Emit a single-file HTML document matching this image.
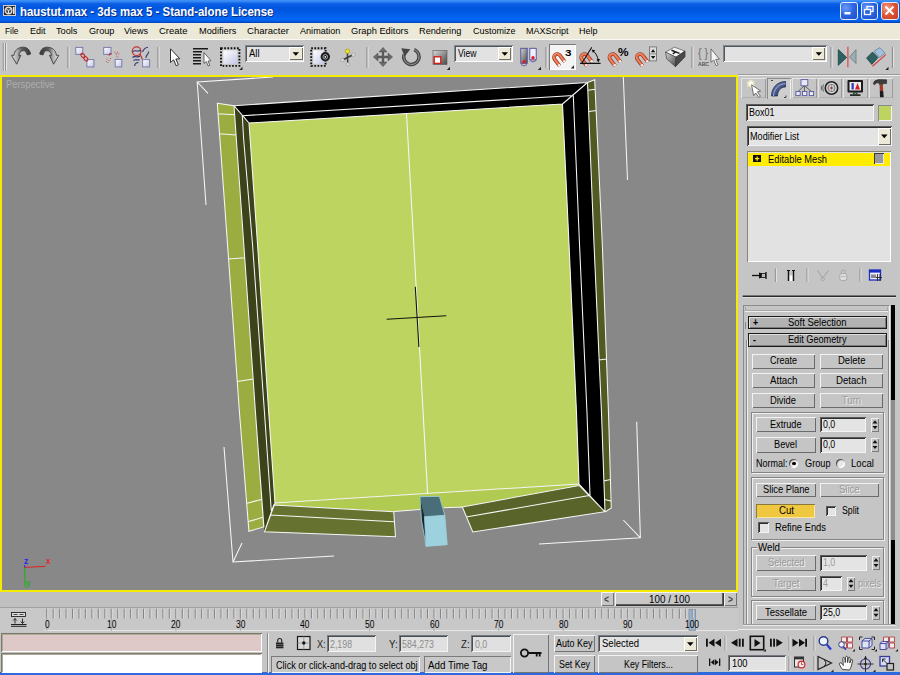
<!DOCTYPE html>
<html lang="en"><head><meta charset="utf-8"><title>haustut.max - 3ds max 5 - Stand-alone License</title>
<style>
html,body{margin:0;padding:0}
body{width:900px;height:675px;position:relative;overflow:hidden;background:#c5c5c5;font-family:"Liberation Sans",sans-serif;font-size:9.8px;color:#000}
body>div,body>svg,body>span{position:absolute}
.t{white-space:nowrap;line-height:1;transform-origin:0 50%;display:block}
</style></head><body>
<div id="title" style="left:0;top:0;width:900px;height:22.800px;background:linear-gradient(#4494f8 0%,#3084f4 7%,#0c60e6 16%,#0056de 32%,#0058e2 50%,#0462ee 70%,#0468f4 86%,#0356da 94%,#0240b8 100%)"></div>
<svg style="left:3px;top:5px" width="13" height="11" viewBox="0 0 13 11"><rect x="0" y="0" width="13" height="11" fill="#2a2a2a"/><rect x="0.5" y="0.5" width="12" height="10" fill="none" stroke="#cfcfcf" stroke-width="1"/><circle cx="5.5" cy="5.5" r="3.4" fill="#555" stroke="#e8e8e8" stroke-width="1.2"/><path d="M5.5 5.5V9M5.5 5.5L2.8 3.6M5.5 5.5L8.2 3.6" stroke="#e8e8e8" stroke-width="1"/><rect x="10" y="2" width="1.6" height="7" fill="#e8e8e8"/></svg>
<span class="t" style="left:19.5px;top:6.0px;font-size:12px;transform:scaleX(0.950);color:#fff;font-weight:bold;text-shadow:1px 1px 0 #0a2a80;">haustut.max - 3ds max 5 - Stand-alone License</span>
<div style="left:840px;top:2.300px;width:15.5px;height:15.500px;border:1px solid #e4ecfc;border-radius:3px;background:radial-gradient(circle at 30% 30%,#6a9cf8 0%,#2c64e0 50%,#1c4cc8 100%)"></div>
<div style="left:860.5px;top:2.300px;width:15.5px;height:15.500px;border:1px solid #e4ecfc;border-radius:3px;background:radial-gradient(circle at 30% 30%,#6a9cf8 0%,#2c64e0 50%,#1c4cc8 100%)"></div>
<div style="left:881px;top:2.300px;width:15.5px;height:15.500px;border:1px solid #e4ecfc;border-radius:3px;background:radial-gradient(circle at 30% 30%,#f0a088 0%,#e0583a 45%,#c43a1c 100%)"></div>
<svg style="left:840px;top:2.300px" width="60" height="18" viewBox="840 3 60 18"><rect x="844.5" y="13" width="6" height="2.4" fill="#fff"/><rect x="867" y="7.5" width="6" height="5" fill="none" stroke="#fff" stroke-width="1.3"/><rect x="864.5" y="10.5" width="6" height="5" fill="#2c64e0" stroke="#fff" stroke-width="1.3"/><path d="M885.5 7.5L893.5 15.5M893.5 7.5L885.5 15.5" stroke="#fff" stroke-width="2"/></svg>
<div style="left:0;top:22.800px;width:900px;height:17px;background:#ece9d8"></div>
<div style="left:0;top:39.300px;width:900px;height:1.200px;background:#f8f8f4"></div>
<span class="t" style="left:5.0px;top:25.9px;font-size:9.9px;transform:scaleX(0.846);">File</span>
<span class="t" style="left:29.5px;top:25.9px;font-size:9.9px;transform:scaleX(0.909);">Edit</span>
<span class="t" style="left:56.0px;top:25.9px;font-size:9.9px;transform:scaleX(0.930);">Tools</span>
<span class="t" style="left:88.5px;top:25.9px;font-size:9.9px;transform:scaleX(0.927);">Group</span>
<span class="t" style="left:124.0px;top:25.9px;font-size:9.9px;transform:scaleX(0.915);">Views</span>
<span class="t" style="left:159.0px;top:25.9px;font-size:9.9px;transform:scaleX(0.959);">Create</span>
<span class="t" style="left:198.5px;top:25.9px;font-size:9.9px;transform:scaleX(0.934);">Modifiers</span>
<span class="t" style="left:246.5px;top:25.9px;font-size:9.9px;transform:scaleX(0.966);">Character</span>
<span class="t" style="left:299.5px;top:25.9px;font-size:9.9px;transform:scaleX(0.920);">Animation</span>
<span class="t" style="left:351.0px;top:25.9px;font-size:9.9px;transform:scaleX(0.941);">Graph Editors</span>
<span class="t" style="left:418.5px;top:25.9px;font-size:9.9px;transform:scaleX(0.930);">Rendering</span>
<span class="t" style="left:472.5px;top:25.9px;font-size:9.9px;transform:scaleX(0.909);">Customize</span>
<span class="t" style="left:526.0px;top:25.9px;font-size:9.9px;transform:scaleX(0.909);">MAXScript</span>
<span class="t" style="left:579.0px;top:25.9px;font-size:9.9px;transform:scaleX(0.909);">Help</span>
<div style="left:0;top:40.500px;width:900px;height:34.500px;background:#c5c5c5"></div>
<div style="left:548.5px;top:44px;width:27.5px;height:26px;background:#f4f4f4;box-shadow:inset 1px 1px 0 #7a7a7a,inset -1px -1px 0 #fff"></div>
<svg style="left:0;top:41px" width="900" height="34" viewBox="0 41 900 34"><defs><linearGradient id="gd" x1="0" y1="0" x2="1" y2="1"><stop offset="0" stop-color="#d8d8d8"/><stop offset="1" stop-color="#484848"/></linearGradient><linearGradient id="gu" x1="0" y1="0" x2="1" y2="0"><stop offset="0" stop-color="#e4e4e4"/><stop offset="0.3" stop-color="#b0b0b0"/><stop offset="0.55" stop-color="#5a5a5a"/><stop offset="1" stop-color="#383838"/></linearGradient><linearGradient id="gr" x1="1" y1="0" x2="0" y2="0"><stop offset="0" stop-color="#e4e4e4"/><stop offset="0.3" stop-color="#b0b0b0"/><stop offset="0.55" stop-color="#5a5a5a"/><stop offset="1" stop-color="#383838"/></linearGradient><linearGradient id="gs" x1="0" y1="0" x2="1" y2="1"><stop offset="0" stop-color="#ffffff"/><stop offset="1" stop-color="#c4c8e4"/></linearGradient></defs><path d="M3.300 43V71M5.600 43V71" stroke="#8a8a8a" stroke-width="1"/><path d="M4.300 43V71M6.600 43V71" stroke="#f0f0f0" stroke-width="0.800"/><path d="M68 47V68" stroke="#8c8c8c" stroke-width="1.2"/><path d="M69.1 47V68" stroke="#e8e8e8" stroke-width="0.9"/><path d="M158 47V68" stroke="#8c8c8c" stroke-width="1.2"/><path d="M159.1 47V68" stroke="#e8e8e8" stroke-width="0.9"/><path d="M367 47V68" stroke="#8c8c8c" stroke-width="1.2"/><path d="M368.1 47V68" stroke="#e8e8e8" stroke-width="0.9"/><path d="M546 47V68" stroke="#8c8c8c" stroke-width="1.2"/><path d="M547.1 47V68" stroke="#e8e8e8" stroke-width="0.9"/><path d="M692 47V68" stroke="#8c8c8c" stroke-width="1.2"/><path d="M693.1 47V68" stroke="#e8e8e8" stroke-width="0.9"/><path d="M831 47V68" stroke="#8c8c8c" stroke-width="1.2"/><path d="M832.1 47V68" stroke="#e8e8e8" stroke-width="0.9"/><path d="M892.5 47V68" stroke="#8c8c8c" stroke-width="1.2"/><path d="M893.6 47V68" stroke="#e8e8e8" stroke-width="0.9"/><path d="M11.5 55.3L14 55.3C14.3 50.5 18 47.2 23.5 47.2C27.5 47.3 30 50.5 30.6 54L27.3 55C26.5 52 25 50.6 23.3 50.6C20.5 50.8 19 53 18.8 55.3L20.8 55.3L16.7 64.2Z" fill="url(#gu)" stroke="#3c3c3c" stroke-width="0.9" stroke-linejoin="round"/><path d="M58.8 55.3 L56.3 55.3 C56 50.5 52.3 47.2 46.8 47.2 C42.8 47.3 40.3 50.5 39.7 54 L43 55 C43.8 52 45.3 50.6 47 50.6 C49.8 50.8 51.3 53 51.5 55.3 L49.5 55.3 L53.6 64.2 Z" fill="url(#gr)" stroke="#3c3c3c" stroke-width="0.9" stroke-linejoin="round"/><rect x="75.8" y="47.4" width="7" height="7" fill="url(#gs)" stroke="#7c7cac" stroke-width="1"/><rect x="86.9" y="59.6" width="7" height="7.3" fill="url(#gs)" stroke="#7c7cac" stroke-width="1"/><ellipse cx="82.9" cy="55.6" rx="2.5" ry="1.6" transform="rotate(48 82.9 55.6)" fill="none" stroke="#c22828" stroke-width="1.1"/><ellipse cx="85.8" cy="58.8" rx="2.5" ry="1.6" transform="rotate(48 85.8 58.800)" fill="none" stroke="#c22828" stroke-width="1.1"/><rect x="103.700" y="47.400" width="7.300" height="7" fill="url(#gs)" stroke="#7c7cac" stroke-width="1"/><rect x="115.200" y="59.400" width="6.600" height="7.500" fill="url(#gs)" stroke="#7c7cac" stroke-width="1"/><path d="M109 55.500Q109.300 53.500 111.500 53.600" fill="none" stroke="#b82828" stroke-width="1.300"/><g fill="#c84848"><circle cx="114.800" cy="52" r="0.600"/><circle cx="116.200" cy="53.800" r="0.700"/><circle cx="117.600" cy="52.300" r="0.600"/><circle cx="119" cy="54" r="0.600"/><circle cx="116.500" cy="56" r="0.600"/><circle cx="118" cy="57" r="0.500"/><circle cx="107" cy="59" r="0.600"/><circle cx="109" cy="60.500" r="0.600"/><circle cx="108" cy="62.500" r="0.600"/><circle cx="110.500" cy="58.500" r="0.600"/><circle cx="106.500" cy="61.500" r="0.500"/></g><circle cx="136.600" cy="51.200" r="4.300" fill="none" stroke="#c83030" stroke-width="1.200"/><path d="M139.800 54.200Q141.500 56.500 142.400 59.600" fill="none" stroke="#c83030" stroke-width="1.200"/><path d="M133 51.500C135.500 49.500 137.500 52.500 140.500 50.200M132.500 57.500C135 55 137 58.500 140 56M133.500 60.500C136 58.500 137.500 61 139.500 59.500M134.500 66C135 63 136.500 62.500 138.500 62.500M142.500 52C143.500 49.500 144.500 47.500 148 47.300M146 58C145.500 55 148.500 54.500 148.800 51.500" fill="none" stroke="#2c3470" stroke-width="1.100"/><rect x="142.600" y="59.600" width="7" height="7.300" fill="url(#gs)" stroke="#7c7cac" stroke-width="1"/><path d="M170.500 48.800V62.500L173.600 59.800L176.200 65.800L178.400 64.800L175.800 59L179.800 58.800Z" fill="#fff" stroke="#333" stroke-width="1" stroke-linejoin="round"/><path d="M193 48.800H208M193 51.800H202M193 54.800H201M193 57.800H201M193 60.800H201M193 63.800H201" stroke="#1a1a1a" stroke-width="1.500"/><path d="M204 52.500V63.500L206.300 61.500L208.200 66L209.800 65.300L208 61L211 60.800Z" fill="#fff" stroke="#444" stroke-width="0.800" stroke-linejoin="round"/><rect x="223.300" y="50.300" width="14" height="13.600" fill="url(#gs)"/><rect x="221" y="48.300" width="18.400" height="17.600" fill="none" stroke="#111" stroke-width="1.900" stroke-dasharray="1.700 1.500"/><path d="M242.5 70h-3.2l3.2 -3.2z" fill="#222"/><rect x="313.300" y="50.300" width="11" height="13.600" fill="url(#gs)"/><rect x="311.200" y="48.300" width="14.400" height="17.600" fill="none" stroke="#111" stroke-width="1.900" stroke-dasharray="1.700 1.500"/><circle cx="325.300" cy="56.800" r="4.700" fill="#1a1a1a"/><circle cx="325.300" cy="56.800" r="2.300" fill="none" stroke="#bcbcbc" stroke-width="0.900"/><circle cx="325.300" cy="56.800" r="0.900" fill="#fff"/><path d="M347.500 52.500L347.500 57.500M342.700 60L347.500 57.500L353.200 54.800M347.500 57.500L347.800 64" stroke="#3c3c3c" stroke-width="1.500" fill="none"/><circle cx="347.500" cy="51.300" r="2.200" fill="#f0e020" stroke="#9a9020" stroke-width="0.600"/><circle cx="342.500" cy="60.100" r="1.700" fill="#e0e0e0" stroke="#888" stroke-width="0.500"/><circle cx="353.400" cy="54.700" r="1.700" fill="#e0e0e0" stroke="#888" stroke-width="0.500"/><circle cx="347.800" cy="64.300" r="1.700" fill="#e0e0e0" stroke="#888" stroke-width="0.500"/><path d="M383 50V64M376 57H390" stroke="#5a5a5a" stroke-width="2.300"/><path d="M383 47.400l4 4.600h-8zM383 66.600l4 -4.600h-8zM373.400 57l4.600 -4v8zM392.600 57l-4.600 -4v8z" fill="#6a6a6a" stroke="#484848" stroke-width="0.500"/><path d="M414.200 49.600A7.700 7.700 0 1 1 404 54.500" fill="none" stroke="#444" stroke-width="3.500"/><path d="M414.200 49.600A7.700 7.700 0 1 1 404 54.500" fill="none" stroke="#8c8c8c" stroke-width="1.100"/><path d="M401.300 48.300L410.300 49.300L404.600 56.600Z" fill="#444"/><rect x="433" y="50.500" width="14" height="14" fill="url(#gd)" stroke="#555" stroke-width="0.600"/><rect x="434.200" y="56.800" width="6.600" height="6.600" fill="#fff" stroke="#d02020" stroke-width="1.400"/><path d="M450 70h-3.2l3.2 -3.2z" fill="#222"/><rect x="520.800" y="48.300" width="6.400" height="15" fill="url(#gd)" stroke="#4a4a9a" stroke-width="0.900"/><rect x="529.800" y="48.300" width="6.400" height="11.500" fill="#eef" stroke="#4a4a9a" stroke-width="0.900"/><circle cx="524" cy="61.800" r="1.700" fill="#e02020"/><circle cx="533" cy="57.800" r="1.700" fill="#e02020"/><path d="M521 64.500Q524 67.500 527 64.500M530 60.500Q533 63.500 536 60.500" fill="none" stroke="#4a4a9a" stroke-width="0.800"/><path d="M541 70h-3.2l3.2 -3.2z" fill="#222"/><path d="M559.64 65.92L554.66 59.28A3.3 3.3 0 0 1 559.94 55.32L564.92 61.96" fill="none" stroke="#7a3a28" stroke-width="3.7"/><path d="M559.64 65.92L554.66 59.28A3.3 3.3 0 0 1 559.94 55.32L564.92 61.96" fill="none" stroke="#e8643e" stroke-width="2.7"/><path d="M559.64 65.92L554.66 59.28A3.3 3.3 0 0 1 559.94 55.32L564.92 61.96" fill="none" stroke="#f6a080" stroke-width="0.8" transform="translate(-0.5,-0.5)"/><path d="M559.64 65.92L558.62 64.56M564.92 61.96L563.90 60.60" fill="none" stroke="#f6f6f6" stroke-width="2.7"/><path d="M574 68.5h-3.2l3.2 -3.2z" fill="#222"/><path d="M586.84 65.92L581.86 59.28A3.3 3.3 0 0 1 587.14 55.32L592.12 61.96" fill="none" stroke="#7a3a28" stroke-width="3.7"/><path d="M586.84 65.92L581.86 59.28A3.3 3.3 0 0 1 587.14 55.32L592.12 61.96" fill="none" stroke="#e8643e" stroke-width="2.7"/><path d="M586.84 65.92L581.86 59.28A3.3 3.3 0 0 1 587.14 55.32L592.12 61.96" fill="none" stroke="#f6a080" stroke-width="0.8" transform="translate(-0.5,-0.5)"/><path d="M586.84 65.92L585.82 64.56M592.12 61.96L591.10 60.60" fill="none" stroke="#f6f6f6" stroke-width="2.7"/><path d="M580 63.400H600.600M582 63L591.800 47.200" stroke="#111" stroke-width="1.100" fill="none"/><path d="M592.500 50.500Q597.500 54 598.300 61" stroke="#111" stroke-width="1" fill="none"/><path d="M591.600 49.600l3.600 0.600l-2.200 2.700zM598.400 62.600l-1.900 -3.300l3.500 -0.300z" fill="#111"/><path d="M615.14 65.92L610.16 59.28A3.3 3.3 0 0 1 615.44 55.32L620.42 61.96" fill="none" stroke="#7a3a28" stroke-width="3.7"/><path d="M615.14 65.92L610.16 59.28A3.3 3.3 0 0 1 615.44 55.32L620.42 61.96" fill="none" stroke="#e8643e" stroke-width="2.7"/><path d="M615.14 65.92L610.16 59.28A3.3 3.3 0 0 1 615.44 55.32L620.42 61.96" fill="none" stroke="#f6a080" stroke-width="0.8" transform="translate(-0.5,-0.5)"/><path d="M615.14 65.92L614.12 64.56M620.42 61.96L619.40 60.60" fill="none" stroke="#f6f6f6" stroke-width="2.7"/><path d="M642.44 65.92L637.46 59.28A3.3 3.3 0 0 1 642.74 55.32L647.72 61.96" fill="none" stroke="#7a3a28" stroke-width="3.7"/><path d="M642.44 65.92L637.46 59.28A3.3 3.3 0 0 1 642.74 55.32L647.72 61.96" fill="none" stroke="#e8643e" stroke-width="2.7"/><path d="M642.44 65.92L637.46 59.28A3.3 3.3 0 0 1 642.74 55.32L647.72 61.96" fill="none" stroke="#f6a080" stroke-width="0.8" transform="translate(-0.5,-0.5)"/><path d="M642.44 65.92L641.42 64.56M647.72 61.96L646.70 60.60" fill="none" stroke="#f6f6f6" stroke-width="2.7"/><rect x="649.600" y="46.900" width="7" height="14" fill="#dcdcdc" stroke="#6a6a6a" stroke-width="0.800"/><path d="M650.900 52.300h4.400l-2.200 -3zM650.900 55.900h4.400l-2.200 3z" fill="#111"/><path d="M649.600 53.900h7" stroke="#6a6a6a" stroke-width="0.700"/><path d="M665.500 52.200L674.400 47.200L685 51.100L676 57.200Z" fill="#f4f4f4" stroke="#555" stroke-width="0.700"/><path d="M665.500 52.200L676 57.200L675.500 66.700L666.700 58.900Z" fill="url(#gd)" stroke="#444" stroke-width="0.700"/><path d="M676 57.200L685 51.100L685 56.700L675.500 66.700Z" fill="#4a4a4a" stroke="#333" stroke-width="0.700"/><path d="M671.500 50.300L679.500 53.400M675.500 51.800L672.800 54" stroke="#1a1a1a" stroke-width="1.500" fill="none"/><path d="M711 48.900V62.300L713.700 60L716 65.700L718 64.800L715.700 59.400L719.400 59.200Z" fill="#f4f4f4" stroke="#666" stroke-width="0.900" stroke-linejoin="round"/><path d="M838.300 49.600V65.300L846.600 57.400Z" fill="#2c6262" stroke="#1c4040" stroke-width="0.800"/><path d="M856 49.600V63.600L849.600 57Z" fill="#9cb0b4" stroke="#647c80" stroke-width="0.800"/><path d="M847.900 46.800V67.300" stroke="#e03838" stroke-width="1.100"/><path d="M866.600 58L872.600 52L878 57.600L871.800 64.400Z" fill="#2c6262" stroke="#1c4040" stroke-width="0.800"/><path d="M874.200 51.200L880 47.600L885 53.200L879.400 57.400Z" fill="#a4c0dc" stroke="#64809c" stroke-width="0.800"/><path d="M872.500 66.200L885.800 54.600" stroke="#e03838" stroke-width="1.200"/><path d="M888.5 70h-3.2l3.2 -3.2z" fill="#222"/></svg>
<div style="left:245px;top:45px;width:59px;height:16.5px;background:#e2e2e2;box-shadow:inset 1px 1px 0 #80868c,inset -1px -1px 0 #fff,inset 2px 2px 0 #50565c"></div>
<div style="left:289px;top:47px;width:13.5px;height:13.0px;background:#ece9d8;box-shadow:inset 1px 1px 0 #fff,inset -1px -1px 0 #716f64"></div>
<svg style="left:289px;top:45px" width="14" height="16.5" viewBox="289 45 14 16.5"><path d="M292.6 52.15H299.0L295.8 55.75Z" fill="#000"/></svg>
<span class="t" style="left:248.5px;top:49.2px;font-size:10px;transform:scaleX(0.945);">All</span>
<div style="left:454px;top:45px;width:58.5px;height:16.5px;background:#e2e2e2;box-shadow:inset 1px 1px 0 #80868c,inset -1px -1px 0 #fff,inset 2px 2px 0 #50565c"></div>
<div style="left:497.5px;top:47px;width:13.5px;height:13.0px;background:#ece9d8;box-shadow:inset 1px 1px 0 #fff,inset -1px -1px 0 #716f64"></div>
<svg style="left:497.5px;top:45px" width="14" height="16.5" viewBox="497.5 45 14 16.5"><path d="M501.1 52.15H507.5L504.3 55.75Z" fill="#000"/></svg>
<span class="t" style="left:457.5px;top:49.2px;font-size:10px;transform:scaleX(0.861);">View</span>
<div style="left:722.5px;top:45px;width:104px;height:16.5px;background:#e2e2e2;box-shadow:inset 1px 1px 0 #80868c,inset -1px -1px 0 #fff,inset 2px 2px 0 #50565c"></div>
<div style="left:811.5px;top:47px;width:13.5px;height:13.0px;background:#ece9d8;box-shadow:inset 1px 1px 0 #fff,inset -1px -1px 0 #716f64"></div>
<svg style="left:811.5px;top:45px" width="14" height="16.5" viewBox="811.5 45 14 16.5"><path d="M815.0999999999999 52.15H821.5L818.3 55.75Z" fill="#000"/></svg>
<span class="t" style="left:565.3px;top:48.3px;font-size:9.6px;transform:scaleX(1.218);font-weight:bold;">3</span>
<span class="t" style="left:618.0px;top:47.0px;font-size:10.6px;transform:scaleX(1.125);font-weight:bold;">%</span>
<span class="t" style="left:698.3px;top:47.1px;font-size:12px;transform:scaleX(0.881);color:#707070;">{ }</span>
<span class="t" style="left:698.3px;top:61.8px;font-size:5.2px;transform:scaleX(0.976);color:#555;font-weight:bold;">ABC</span>
<div style="left:0;top:74.600px;width:738px;height:517.400px;background:#f4ec00"></div>
<svg style="left:2px;top:77px" width="734" height="513" viewBox="2 77 734 513" shape-rendering="geometricPrecision"><rect x="2" y="77" width="734" height="513" fill="#888888"/><polygon points="217.3,103.3 234,105.7 243.75,244 255.5,413 263.9,526.9 248.9,531.3 239.5,413 227.5,244" fill="#9bad40"/><polygon points="234,105.7 249,123 257.5,244 268.75,413 275,503 264.5,531.75 263.75,526.75 255.5,413 243.75,244" fill="#3c431b"/><polygon points="234,105.7 587.5,82.5 562.5,104 249,123" fill="#000"/><polygon points="587.5,82.5 594,244 601.5,413 605,512 579,484 576.5,413 569,244 562.5,104" fill="#000"/><polygon points="587.5,82.5 594.7,79.7 602.3,244 608.5,413 611.25,508 605,512 601.5,413 594,244" fill="#525a22"/><polygon points="249,123 562.5,104 569,244 576.5,413 579,484 275,503 268.75,413 257.5,244" fill="#bed460"/><polygon points="275,503 579,484 579.4,485.6 462.3,506.9 415,509.6 394,511.6 273.8,505" fill="#b1ca52"/><polygon points="273.75,505 393.75,511.75 395.5,536.75 264.5,531.75" fill="#66722f"/><polygon points="462.3,506.9 579.2,485.5 605,511.75 472.8,532" fill="#59642a"/><path d="M217.3 103.3L234 105.7L243.75 244L255.5 413L263.9 526.9L248.9 531.3L239.5 413L227.5 244ZM218 113.7L234.6 114.7M219.6 133.7L236 135M228.7 259L244.8 257.7M237.3 381.5L253.3 379M247.2 503.2L261.3 499.5M248.6 521.6L263 517.2M242.3 115.7L243.7 140L252.5 244L264.5 413L271.25 510.5M263.75 526.75L255.5 413L243.75 244L234 105.7M234 105.7L587.5 82.5M242.3 115.7L573.3 95.5M234 105.7L249 123M562.5 104L587.5 82.5M249 123L562.5 104L569 244L576.5 413L579 484L275 503L268.75 413L257.5 244ZM573.3 95.5L579.5 244L587 413L590 495.5M587.5 82.5L594 244L601.5 413L605 512M587.5 82.5L594.7 79.7L602.3 244L608.5 413L611.25 508L605 512M588 90.3L595.2 89.3M589 111.5L596.2 110.5M598.8 360L606.6 359M603.8 481L610.5 479.5M604.6 499.5L611 501M579 484L605 512M406.5 113.3L427.6 493.4M273.75 505L393.75 511.75L395.5 536.75L264.5 531.75ZM270.5 515L393.9 521.75M275 503L264.5 531.75M462.3 506.9L579.2 485.5L605 511.75L472.8 532ZM466.2 517L589.3 495.6M394 511.6L420 509.4M444 507.8L462.3 506.9M206 205L197.2 82L273 77M197.2 82L208 93.3M623.3 76.7L627.5 180M224 447L233 562L334 556M233 562L242 543M636.7 421.8L640.4 537.8L539 544M640.4 537.8L623.3 520" stroke="#f6f6f6" stroke-width="1.05" fill="none"/><path d="M386.700 319.300L446.300 315.700M415.300 286.700L418.900 347" stroke="#14140c" stroke-width="1.1" fill="none"/><polygon points="420,496.7 439.4,496.4 444.8,515.3 424.4,516.7" fill="#4a6d7a"/><polygon points="424.4,516.7 444.8,515.3 447.200,544.700 426.100,546.400" fill="#9dd1de"/><polygon points="420,496.7 424.4,516.7 426.100,546.400 421.500,520" fill="#16282e"/><path d="M420 496.700L439.400 496.400L444.800 515.300L447.200 544.700L426.100 546.400L421.500 520ZM424.400 516.700L444.800 515.300M424.400 516.700L426.100 546.400" stroke="#9dd1de" stroke-width="0.800" fill="none"/><path d="M24.600 567.400L45.400 566.400" stroke="#e02020" stroke-width="1"/><path d="M24.600 567.400L25.200 587" stroke="#20b020" stroke-width="1.100"/><path d="M24.600 567.400L24.900 565" stroke="#2020e0" stroke-width="1"/></svg>
<span class="t" style="left:5.8px;top:80.2px;font-size:10px;transform:scaleX(0.934);color:#adadad;">Perspective</span>
<span class="t" style="left:23.8px;top:556.7px;font-size:9px;transform:scaleX(0.956);color:#2828e8;font-weight:bold;">z</span>
<span class="t" style="left:46.2px;top:556.7px;font-size:9px;transform:scaleX(0.919);color:#e82828;font-weight:bold;">x</span>
<span class="t" style="left:26.2px;top:579.4px;font-size:9px;transform:scaleX(0.879);color:#20b020;font-weight:bold;">y</span>
<div style="left:0;top:592px;width:738px;height:15px;background:#c0c0c0"></div>
<div style="left:0;top:607px;width:738px;height:25px;background:#c8c8c8"></div><div style="left:0;top:607.2px;width:738px;height:1px;background:#a2a2a2"></div><div style="left:44px;top:630px;width:694px;height:1px;background:#e6e6e6"></div>
<div style="left:601px;top:592.400px;width:12.600px;height:14px;background:#c5c5c5;box-shadow:inset 1px 1px 0 #f2f2f2,inset -1px -1px 0 #747474;"></div>
<div style="left:724px;top:592.400px;width:13px;height:14px;background:#c5c5c5;box-shadow:inset 1px 1px 0 #f2f2f2,inset -1px -1px 0 #747474;"></div>
<div style="left:614.5px;top:592.400px;width:109px;height:14px;background:#c8c8c8;box-shadow:inset 1px 1px 0 #f4f4f4,inset -1px -1px 0 #3a3a3a,inset -2px -2px 0 #5a5a5a"></div>
<span class="t" style="left:649.0px;top:594.5px;font-size:10px;transform:scaleX(0.983);">100 / 100</span>
<span class="t" style="left:604.4px;top:594.3px;font-size:11px;transform:scaleX(0.778);color:#444;font-weight:bold;">&lt;</span>
<span class="t" style="left:727.8px;top:594.3px;font-size:11px;transform:scaleX(0.778);color:#444;font-weight:bold;">></span>
<svg style="left:0;top:607px" width="738" height="26" viewBox="0 607 738 26"><rect x="689" y="609.5" width="6.400" height="21" fill="#9cb4cc" stroke="#7088a0" stroke-width="0.700"/><path d="M46.8 608.800V618.500M53.3 608.800V618.500M59.7 608.800V618.500M66.2 608.800V618.500M72.6 608.800V618.500M79.1 608.800V618.500M85.5 608.800V618.500M92.0 608.800V618.500M98.4 608.800V618.500M104.9 608.800V618.500M111.3 608.800V618.500M117.8 608.800V618.500M124.3 608.800V618.500M130.7 608.800V618.500M137.2 608.800V618.500M143.6 608.800V618.500M150.1 608.800V618.500M156.5 608.800V618.500M163.0 608.800V618.500M169.4 608.800V618.500M175.9 608.800V618.500M182.4 608.800V618.500M188.8 608.800V618.500M195.3 608.800V618.500M201.7 608.800V618.500M208.2 608.800V618.500M214.6 608.800V618.500M221.1 608.800V618.500M227.5 608.800V618.500M234.0 608.800V618.500M240.4 608.800V618.500M246.9 608.800V618.500M253.4 608.800V618.500M259.8 608.800V618.500M266.3 608.800V618.500M272.7 608.800V618.500M279.2 608.800V618.500M285.6 608.800V618.500M292.1 608.800V618.500M298.5 608.800V618.500M305.0 608.800V618.500M311.5 608.800V618.500M317.9 608.800V618.500M324.4 608.800V618.500M330.8 608.800V618.500M337.3 608.800V618.500M343.7 608.800V618.500M350.2 608.800V618.500M356.6 608.800V618.500M363.1 608.800V618.500M369.6 608.800V618.500M376.0 608.800V618.500M382.5 608.800V618.500M388.9 608.800V618.500M395.4 608.800V618.500M401.8 608.800V618.500M408.3 608.800V618.500M414.7 608.800V618.500M421.2 608.800V618.500M427.6 608.800V618.500M434.1 608.800V618.500M440.6 608.800V618.500M447.0 608.800V618.500M453.5 608.800V618.500M459.9 608.800V618.500M466.4 608.800V618.500M472.8 608.800V618.500M479.3 608.800V618.500M485.7 608.800V618.500M492.2 608.800V618.500M498.7 608.800V618.500M505.1 608.800V618.500M511.6 608.800V618.500M518.0 608.800V618.500M524.5 608.800V618.500M530.9 608.800V618.500M537.4 608.800V618.500M543.8 608.800V618.500M550.3 608.800V618.500M556.7 608.800V618.500M563.2 608.800V618.500M569.7 608.800V618.500M576.1 608.800V618.500M582.6 608.800V618.500M589.0 608.800V618.500M595.5 608.800V618.500M601.9 608.800V618.500M608.4 608.800V618.500M614.8 608.800V618.500M621.3 608.800V618.500M627.8 608.800V618.500M634.2 608.800V618.500M640.7 608.800V618.500M647.1 608.800V618.500M653.6 608.800V618.500M660.0 608.800V618.500M666.5 608.800V618.500M672.9 608.800V618.500M679.4 608.800V618.500M685.8 608.800V618.500M692.3 608.800V618.500" stroke="#848484" stroke-width="1.200"/><path d="M47.7 608.800V618.500M54.2 608.800V618.500M60.6 608.800V618.500M67.1 608.800V618.500M73.5 608.800V618.500M80.0 608.800V618.500M86.4 608.800V618.500M92.9 608.800V618.500M99.3 608.800V618.500M105.8 608.800V618.500M112.2 608.800V618.500M118.7 608.800V618.500M125.2 608.800V618.500M131.6 608.800V618.500M138.1 608.800V618.500M144.5 608.800V618.500M151.0 608.800V618.500M157.4 608.800V618.500M163.9 608.800V618.500M170.3 608.800V618.500M176.8 608.800V618.500M183.3 608.800V618.500M189.7 608.800V618.500M196.2 608.800V618.500M202.6 608.800V618.500M209.1 608.800V618.500M215.5 608.800V618.500M222.0 608.800V618.500M228.4 608.800V618.500M234.9 608.800V618.500M241.3 608.800V618.500M247.8 608.800V618.500M254.3 608.800V618.500M260.7 608.800V618.500M267.2 608.800V618.500M273.6 608.800V618.500M280.1 608.800V618.500M286.5 608.800V618.500M293.0 608.800V618.500M299.4 608.800V618.500M305.9 608.800V618.500M312.4 608.800V618.500M318.8 608.800V618.500M325.3 608.800V618.500M331.7 608.800V618.500M338.2 608.800V618.500M344.6 608.800V618.500M351.1 608.800V618.500M357.5 608.800V618.500M364.0 608.800V618.500M370.4 608.800V618.500M376.9 608.800V618.500M383.4 608.800V618.500M389.8 608.800V618.500M396.3 608.800V618.500M402.7 608.800V618.500M409.2 608.800V618.500M415.6 608.800V618.500M422.1 608.800V618.500M428.5 608.800V618.500M435.0 608.800V618.500M441.5 608.800V618.500M447.9 608.800V618.500M454.4 608.800V618.500M460.8 608.800V618.500M467.3 608.800V618.500M473.7 608.800V618.500M480.2 608.800V618.500M486.6 608.800V618.500M493.1 608.800V618.500M499.6 608.800V618.500M506.0 608.800V618.500M512.5 608.800V618.500M518.9 608.800V618.500M525.4 608.800V618.500M531.8 608.800V618.500M538.3 608.800V618.500M544.7 608.800V618.500M551.2 608.800V618.500M557.6 608.800V618.500M564.1 608.800V618.500M570.6 608.800V618.500M577.0 608.800V618.500M583.5 608.800V618.500M589.9 608.800V618.500M596.4 608.800V618.500M602.8 608.800V618.500M609.3 608.800V618.500M615.7 608.800V618.500M622.2 608.800V618.500M628.6 608.800V618.500M635.1 608.800V618.500M641.6 608.800V618.500M648.0 608.800V618.500M654.5 608.800V618.500M660.9 608.800V618.500M667.4 608.800V618.500M673.8 608.800V618.500M680.3 608.800V618.500M686.7 608.800V618.500M693.2 608.800V618.500" stroke="#e6e6e6" stroke-width="0.700"/><path d="M46.8 618.500V631M111.3 618.500V631M175.9 618.500V631M240.4 618.500V631M305.0 618.500V631M369.6 618.500V631M434.1 618.500V631M498.7 618.500V631M563.2 618.500V631M627.8 618.500V631M692.3 618.500V631" stroke="#aaaaaa" stroke-width="0.900"/><rect x="11.500" y="612.500" width="14" height="4" fill="#ddd" stroke="#222" stroke-width="0.900"/><path d="M13.500 614.500h4M19.500 614.500h4" stroke="#222" stroke-width="0.800"/><path d="M11 624.500H26.500M11 626.300H26.500" stroke="#222" stroke-width="1"/><path d="M15 623.500V618.500M13.300 620.500L15 618.500L16.700 620.500M22.500 618.500V623.500M20.800 621.500L22.500 623.500L24.200 621.500" stroke="#222" stroke-width="0.900" fill="none"/></svg>
<span class="t" style="left:44.5px;top:619.6px;font-size:10px;transform:scaleX(0.836);">0</span>
<span class="t" style="left:106.7px;top:619.6px;font-size:10px;transform:scaleX(0.836);">10</span>
<span class="t" style="left:171.2px;top:619.6px;font-size:10px;transform:scaleX(0.836);">20</span>
<span class="t" style="left:235.8px;top:619.6px;font-size:10px;transform:scaleX(0.836);">30</span>
<span class="t" style="left:300.4px;top:619.6px;font-size:10px;transform:scaleX(0.836);">40</span>
<span class="t" style="left:364.9px;top:619.6px;font-size:10px;transform:scaleX(0.836);">50</span>
<span class="t" style="left:429.5px;top:619.6px;font-size:10px;transform:scaleX(0.836);">60</span>
<span class="t" style="left:494.0px;top:619.6px;font-size:10px;transform:scaleX(0.836);">70</span>
<span class="t" style="left:558.5px;top:619.6px;font-size:10px;transform:scaleX(0.836);">80</span>
<span class="t" style="left:623.1px;top:619.6px;font-size:10px;transform:scaleX(0.836);">90</span>
<span class="t" style="left:685.3px;top:619.6px;font-size:10px;transform:scaleX(0.836);">100</span>
<div style="left:0;top:632px;width:900px;height:41px;background:#c5c5c5"></div>
<div style="left:0;top:672.4px;width:900px;height:2.6px;background:#2e6ade"></div>
<div style="left:1px;top:632.6px;width:261px;height:19.6px;background:#dec8c8;box-shadow:inset 1px 1px 0 #7a7a6a,inset -1px -1px 0 #fff,inset 2px 2px 0 #b0a898"></div>
<div style="left:1px;top:653.2px;width:261px;height:19.4px;background:#fff;box-shadow:inset 1px 1px 0 #7a7a6a,inset -1px -1px 0 #fff,inset 2px 2px 0 #b0a898"></div>
<div style="left:267px;top:633px;width:1px;height:40px;background:#8a8a8a"></div><div style="left:268px;top:633px;width:1px;height:40px;background:#f0f0f0"></div>
<span class="t" style="left:317.0px;top:639.8px;font-size:10px;transform:scaleX(0.910);color:#222;">X:</span>
<div style="left:326.5px;top:635px;width:49px;height:17px;background:#e0e0e0;box-shadow:inset 1px 1px 0 #747a80,inset -1px -1px 0 #f4f4f4,inset 2px 2px 0 #484e54;"></div>
<span class="t" style="left:330.3px;top:639.8px;font-size:10px;transform:scaleX(0.880);color:#8c8c8c;">2,198</span>
<span class="t" style="left:389.0px;top:639.8px;font-size:10px;transform:scaleX(0.967);color:#222;">Y:</span>
<div style="left:398.5px;top:635px;width:49px;height:17px;background:#e0e0e0;box-shadow:inset 1px 1px 0 #747a80,inset -1px -1px 0 #f4f4f4,inset 2px 2px 0 #484e54;"></div>
<span class="t" style="left:402.3px;top:639.8px;font-size:10px;transform:scaleX(0.880);color:#8c8c8c;">584,273</span>
<span class="t" style="left:461.0px;top:639.8px;font-size:10px;transform:scaleX(0.968);color:#222;">Z:</span>
<div style="left:471px;top:635px;width:40px;height:17px;background:#e0e0e0;box-shadow:inset 1px 1px 0 #747a80,inset -1px -1px 0 #f4f4f4,inset 2px 2px 0 #484e54;"></div>
<span class="t" style="left:474.8px;top:639.8px;font-size:10px;transform:scaleX(0.880);color:#8c8c8c;">0,0</span>
<div style="left:270.500px;top:656px;width:149px;height:17px;background:#c8c8c8;box-shadow:inset 1px 1px 0 #7a7a7a,inset -1px -1px 0 #f4f4f4"></div>
<span class="t" style="left:275.5px;top:660.5px;font-size:10px;transform:scaleX(0.913);">Click or click-and-drag to select obj</span>
<div style="left:423.500px;top:656px;width:87px;height:17px;background:#c8c8c8;box-shadow:inset 1px 1px 0 #7a7a7a,inset -1px -1px 0 #f4f4f4"></div>
<span class="t" style="left:428.0px;top:660.5px;font-size:10px;transform:scaleX(0.976);">Add Time Tag</span>
<div style="left:512.500px;top:634px;width:36.500px;height:39px;background:#c5c5c5;box-shadow:inset 1px 1px 0 #f2f2f2,inset -1px -1px 0 #747474;"></div>
<div style="left:553.500px;top:634.500px;width:41px;height:17px;background:#c5c5c5;box-shadow:inset 1px 1px 0 #f2f2f2,inset -1px -1px 0 #747474;"></div>
<span class="t" style="left:555.8px;top:639.3px;font-size:10px;transform:scaleX(0.899);">Auto Key</span>
<div style="left:553.500px;top:655px;width:41px;height:18px;background:#c5c5c5;box-shadow:inset 1px 1px 0 #f2f2f2,inset -1px -1px 0 #747474;"></div>
<span class="t" style="left:558.5px;top:659.8px;font-size:10px;transform:scaleX(0.885);">Set Key</span>
<div style="left:598px;top:635px;width:100px;height:16.500px;background:#e2e2e2;box-shadow:inset 1px 1px 0 #747a80,inset -1px -1px 0 #f4f4f4,inset 2px 2px 0 #484e54;"></div>
<span class="t" style="left:601.5px;top:638.8px;font-size:10px;transform:scaleX(0.951);">Selected</span>
<div style="left:683.500px;top:637px;width:13.500px;height:13.500px;background:#ece9d8;box-shadow:inset 1px 1px 0 #fff,inset -1px -1px 0 #716f64"></div>
<div style="left:598px;top:655px;width:100px;height:18px;background:#c5c5c5;box-shadow:inset 1px 1px 0 #f2f2f2,inset -1px -1px 0 #747474;"></div>
<span class="t" style="left:624.0px;top:659.8px;font-size:10px;transform:scaleX(0.882);">Key Filters...</span>
<div style="left:727.500px;top:654.500px;width:58.500px;height:16.500px;background:#e2e2e2;box-shadow:inset 1px 1px 0 #747a80,inset -1px -1px 0 #f4f4f4,inset 2px 2px 0 #484e54;"></div>
<span class="t" style="left:731.5px;top:658.8px;font-size:10px;transform:scaleX(0.929);">100</span>
<svg style="left:268px;top:632px" width="632" height="41" viewBox="268 632 632 41"><rect x="276" y="642.500" width="7.400" height="5.800" fill="#222"/><path d="M277.700 642.500V640.500A2 2 0 0 1 281.700 640.500V642.500" fill="none" stroke="#222" stroke-width="1.100"/><path d="M276 644.500h7.400M276 646.500h7.400" stroke="#999" stroke-width="0.500"/><rect x="297.500" y="636.500" width="12.500" height="13" fill="#d8d8d8" stroke="#1a1a1a" stroke-width="1.200"/><path d="M303.800 636.500V649.500M297.500 643H310" stroke="#8a8a8a" stroke-width="0.700"/><circle cx="303.800" cy="643" r="1.700" fill="#111"/><circle cx="524.500" cy="653" r="3.600" fill="none" stroke="#111" stroke-width="1.800"/><path d="M528.500 653H541.500M536.700 653V656.500M539.700 653V656.500" stroke="#111" stroke-width="1.800" fill="none"/><path d="M687 642.300h6.600l-3.300 3.600z" fill="#000"/><path d="M725 636V651" stroke="#8c8c8c" stroke-width="1"/><path d="M726 636V651" stroke="#ececec" stroke-width="0.800"/><path d="M789 636V651" stroke="#8c8c8c" stroke-width="1"/><path d="M790 636V651" stroke="#ececec" stroke-width="0.800"/><path d="M814 636V651" stroke="#8c8c8c" stroke-width="1"/><path d="M815 636V651" stroke="#ececec" stroke-width="0.800"/><path d="M789 656V671M814 656V671" stroke="#8c8c8c" stroke-width="1"/><path d="M790 656V671M815 656V671" stroke="#ececec" stroke-width="0.800"/><rect x="706" y="638.700" width="1.800" height="8" fill="#111"/><path d="M714.500 638.700v8l-6 -4zM721 638.700v8l-6 -4z" fill="#111"/><path d="M737.500 638.700v8l-6.500 -4z" fill="#111"/><rect x="738.800" y="638.700" width="1.800" height="8" fill="#111"/><rect x="742" y="638.700" width="1.800" height="8" fill="#111"/><rect x="750.300" y="636.300" width="13.400" height="13.400" fill="#c5c5c5" stroke="#111" stroke-width="1.600"/><path d="M754.500 639v8l6 -4z" fill="#111"/><path d="M766 651.500h-2.600l2.600 -2.600z" fill="#222"/><rect x="770" y="638.700" width="1.800" height="8" fill="#111"/><rect x="773.200" y="638.700" width="1.800" height="8" fill="#111"/><path d="M776.300 638.700v8l6.500 -4z" fill="#111"/><path d="M792.500 638.700v8l6 -4zM799 638.700v8l6 -4z" fill="#111"/><rect x="805.200" y="638.700" width="1.800" height="8" fill="#111"/><rect x="709" y="658.500" width="1.300" height="7.500" fill="#111"/><rect x="719" y="658.500" width="1.300" height="7.500" fill="#111"/><path d="M710.800 662.200l3.600 -3v6zM718.600 662.200l-3.600 -3v6z" fill="#111"/><rect x="794.500" y="657" width="9" height="10" fill="#e8e8e8" stroke="#333" stroke-width="1"/><rect x="794.500" y="657" width="9" height="2.400" fill="#333"/><circle cx="801.500" cy="664.500" r="3.400" fill="#f4e8e8" stroke="#d02020" stroke-width="1.100"/><path d="M801.500 664.500V662.300M801.500 664.500h1.800" stroke="#802020" stroke-width="0.700"/><circle cx="823.500" cy="641" r="4.300" fill="#eef4ff" stroke="#2a3a8a" stroke-width="1.400"/><path d="M826.800 644.500L831 649.500" stroke="#2a3ad0" stroke-width="2.200"/><path d="M841.500 637h5v5h-5zM847.500 637h5v5h-5zM841.500 643h5v5h-5zM847.500 643h5v5h-5z" fill="#f2ecec" stroke="#a83030" stroke-width="0.800"/><circle cx="841.500" cy="644.500" r="2.800" fill="#eef4ff" stroke="#2a3a8a" stroke-width="1"/><path d="M843.500 646.800L846 649.800" stroke="#2a3ad0" stroke-width="1.500"/><path d="M855 651.500h-2.600l2.600 -2.600z" fill="#222"/><path d="M862 641h7v7h-7zM862 641l3 -2.600h7l-3 2.600M872 638.400v7l-3 2.600" fill="#dfe4f4" stroke="#3a3a9a" stroke-width="0.900"/><path d="M859.500 640v-3h3M871.500 637h3v3M859.500 646.500v3h3M874.500 646.500v3h-3" fill="none" stroke="#222" stroke-width="1"/><path d="M877 651.500h-2.600l2.600 -2.600z" fill="#222"/><path d="M883.500 637h5v5h-5zM889.500 637h5v5h-5zM889.500 643h5v5h-5z" fill="#f2ecec" stroke="#a83030" stroke-width="0.800"/><path d="M880 643.500h6v6h-6zM880 643.500l2.200 -2h6l-2.200 2M888.200 641.500v6l-2.200 2" fill="#dfe4f4" stroke="#3a3a9a" stroke-width="0.900"/><path d="M898 651.500h-2.600l2.600 -2.600z" fill="#222"/><path d="M818 656.500L831.500 663L818 669.500Z" fill="none" stroke="#222" stroke-width="1.200"/><path d="M824.500 659.800Q827.500 663 824.500 666.300" fill="none" stroke="#222" stroke-width="1"/><path d="M833.500 672h-2.600l2.600 -2.600z" fill="#222"/><path d="M842.500 669.500C840 666 838.500 663.500 840 662.800C841.500 662.200 842.500 664.500 843.300 665.500L842.800 658.500C842.800 657 844.600 657 844.800 658.500L845.300 662.500L845.600 657.300C845.800 655.800 847.600 656 847.600 657.500L847.600 662.500L848.400 658C848.700 656.600 850.400 657 850.200 658.500L849.800 663L851 660C851.600 658.800 853 659.500 852.600 660.800L851.300 666C850.800 668 850 669 849.500 670Z" fill="#f8f8f8" stroke="#222" stroke-width="0.800" stroke-linejoin="round"/><circle cx="865.500" cy="664" r="5" fill="none" stroke="#3a3a9a" stroke-width="1.100"/><path d="M865.500 656V672M857.500 664H873.500" stroke="#222" stroke-width="0.900"/><circle cx="865.500" cy="664" r="1.300" fill="#222"/><path d="M863.800 659l1.700 -3l1.700 3z" fill="#222"/><path d="M875.500 672h-2.600l2.600 -2.600z" fill="#222"/><rect x="880" y="656.500" width="9.500" height="9.500" fill="#d8dcf0" stroke="#3a3a9a" stroke-width="1.300"/><rect x="887" y="663.500" width="6.500" height="6.500" fill="#c5c5c5" stroke="#222" stroke-width="1.200"/><path d="M882.500 659L887 663.500M882.500 659v3M882.500 659h3" stroke="#222" stroke-width="0.900" fill="none"/></svg>
<div style="left:738px;top:75px;width:162px;height:557px;background:#c5c5c5"></div>
<div style="left:738px;top:74px;width:162px;height:1px;background:#9a9a9a"></div><div style="left:738px;top:75px;width:162px;height:1px;background:#eee"></div>
<div style="left:741px;top:77.500px;width:24.500px;height:20.500px;background:#c5c5c5;box-shadow:inset 1px 1px 0 #e4e4e4,inset -1px 0 0 #9c9c9c,inset 0 -1px 0 #b0b0b0"></div>
<div style="left:766.5px;top:77.500px;width:24.500px;height:21px;background:#cecece;box-shadow:inset 1px 1px 0 #8a8a8a,inset -1px 0 0 #f0f0f0"></div>
<div style="left:792px;top:77.500px;width:24.500px;height:20.500px;background:#c5c5c5;box-shadow:inset 1px 1px 0 #e4e4e4,inset -1px 0 0 #9c9c9c,inset 0 -1px 0 #b0b0b0"></div>
<div style="left:817.5px;top:77.500px;width:24.500px;height:20.500px;background:#c5c5c5;box-shadow:inset 1px 1px 0 #e4e4e4,inset -1px 0 0 #9c9c9c,inset 0 -1px 0 #b0b0b0"></div>
<div style="left:843px;top:77.500px;width:24.500px;height:20.500px;background:#c5c5c5;box-shadow:inset 1px 1px 0 #e4e4e4,inset -1px 0 0 #9c9c9c,inset 0 -1px 0 #b0b0b0"></div>
<div style="left:868.5px;top:77.500px;width:24.500px;height:20.500px;background:#c5c5c5;box-shadow:inset 1px 1px 0 #e4e4e4,inset -1px 0 0 #9c9c9c,inset 0 -1px 0 #b0b0b0"></div>
<svg style="left:738px;top:76px" width="162" height="24" viewBox="738 76 162 24"><defs><linearGradient id="arc" x1="0" y1="0" x2="1" y2="1"><stop offset="0" stop-color="#7888b8"/><stop offset="1" stop-color="#1c2c5c"/></linearGradient></defs><circle cx="750.800" cy="83.600" r="3.600" fill="#fff8d0" opacity="0.450"/><path d="M750.800 79.400l1 2.700l2.800 -0.800l-1.900 2.200l2.100 2l-2.900 -0.200l-0.700 2.900l-1.200 -2.600l-2.800 1l1.700 -2.400l-2.400 -1.700l2.900 -0.300z" fill="#fffdf0" stroke="#ece4a8" stroke-width="0.400"/><path d="M751.600 84.800L753.600 95.600L755.700 93L758.900 97.400L760.400 96.300L757.300 91.800L760.600 91Z" fill="#fff" stroke="#505050" stroke-width="0.800" stroke-linejoin="round"/><path d="M771.500 96C771.500 88 777 81.500 785.500 81.500V87C780.500 87 777.500 91 777.500 96Z" fill="url(#arc)" stroke="#1a2448" stroke-width="0.700"/><path d="M773.500 96C773.700 89.500 778.500 83.800 785.500 83.600" fill="none" stroke="#aab8e0" stroke-width="0.900"/><path d="M771 80.500h2M786 95.500v2h-2" stroke="#222" stroke-width="0.800" fill="none"/><path d="M804.400 85.700L798 91.500M804.400 85.700V91.500M804.400 85.700L811.400 91.500" fill="none" stroke="#555" stroke-width="0.900"/><rect x="801" y="79.600" width="6.800" height="6.200" fill="#e8e8f6" stroke="#5a5aa0" stroke-width="0.900"/><rect x="795.900" y="91.500" width="4.300" height="4.100" fill="#e8e8f6" stroke="#5a5aa0" stroke-width="0.900"/><rect x="802.500" y="91.500" width="4.300" height="4.100" fill="#e8e8f6" stroke="#5a5aa0" stroke-width="0.900"/><rect x="809.300" y="91.500" width="4.300" height="4.100" fill="#e8e8f6" stroke="#5a5aa0" stroke-width="0.900"/><circle cx="831.500" cy="88" r="6.200" fill="#ddd" stroke="#222" stroke-width="1.600"/><circle cx="831.500" cy="88" r="3.600" fill="#eee" stroke="#444" stroke-width="0.700"/><path d="M831.500 84.400V91.600M827.900 88H835.100M829 85.500L834 90.500M834 85.500L829 90.500" stroke="#555" stroke-width="0.500"/><circle cx="831.500" cy="88" r="1.100" fill="#e02020"/><path d="M823.500 84.500Q821.800 88 823.500 91.500M821.800 85.500Q820.600 88 821.800 90.500" fill="none" stroke="#555" stroke-width="0.800"/><rect x="847.500" y="80" width="15.500" height="12.500" rx="1" fill="#1a1a1a"/><rect x="849.500" y="82" width="11.500" height="8.500" fill="#eee"/><rect x="851.500" y="83" width="2.300" height="6.500" fill="#3a3ac0"/><path d="M855 89.500l2.500 -6.500l2.500 6.500z" fill="#d02020"/><rect x="853" y="92.500" width="4.500" height="1.800" fill="#333"/><rect x="850" y="94.300" width="10.500" height="1.600" fill="#1a1a1a"/><rect x="854.300" y="93" width="1.800" height="1" fill="#30c030"/><path d="M873.200 83.800Q874 80 878.500 79.600L886.600 79.800L886.600 83.600L883.200 83.600L883 84.600L879.300 84.600L879 82.800Q876 82.300 874.600 84.800Z" fill="#3c3c3c" stroke="#1a1a1a" stroke-width="0.500"/><path d="M879.600 84.600h3.200l0.400 6.500h-3.400z" fill="#a03a24"/><path d="M879.800 91h3.400l0.500 6.200h-3.700z" fill="#1c1c1c"/></svg>
<div style="left:745.500px;top:104px;width:128px;height:16.500px;background:#e2e2e2;box-shadow:inset 1px 1px 0 #5a5a5a,inset -1px -1px 0 #f4f4f4,inset 2px 2px 0 #2e2e2e;"></div>
<span class="t" style="left:748.8px;top:107.8px;font-size:10px;transform:scaleX(0.899);">Box01</span>
<div style="left:877.500px;top:104.500px;width:14px;height:16px;background:#bed460;box-shadow:inset 1px 1px 0 #8a8a8a,inset -1px -1px 0 #f4f4f4"></div>
<div style="left:746.500px;top:126px;width:145.500px;height:20px;background:#e4e4e4;box-shadow:inset 1px 1px 0 #5a5a5a,inset -1px -1px 0 #f4f4f4,inset 2px 2px 0 #2e2e2e;"></div>
<span class="t" style="left:750.0px;top:131.5px;font-size:10px;transform:scaleX(0.909);">Modifier List</span>
<div style="left:877.500px;top:128px;width:13.500px;height:16.500px;background:#ece9d8;box-shadow:inset 1px 1px 0 #fff,inset -1px -1px 0 #716f64"></div>
<div style="left:746.500px;top:150.500px;width:144.300px;height:111px;background:#e2e2e2;box-shadow:inset 1px 1px 0 #8a8672,inset -1px -1px 0 #fff"></div>
<div style="left:748px;top:152.500px;width:141.500px;height:13px;background:#ffec00"></div>
<div style="left:753.300px;top:154.800px;width:7.700px;height:7.700px;background:#111"></div>
<div style="left:874px;top:153px;width:9.500px;height:10.500px;background:#9a9a9a;box-shadow:inset 1px 1px 0 #3a3a3a,inset -1px -1px 0 #e8e8e8"></div>
<span class="t" style="left:767.7px;top:154.7px;font-size:10px;transform:scaleX(0.931);">Editable Mesh</span>
<svg style="left:738px;top:125px" width="162" height="180" viewBox="738 125 162 180"><path d="M881 134.600h6.600l-3.300 3.600z" fill="#000"/><path d="M755 158.650h4.300M757.150 156.500v4.300" stroke="#ffec00" stroke-width="1.300"/><path d="M775.4 268.500V282" stroke="#8c8c8c" stroke-width="1"/><path d="M776.4 268.500V282" stroke="#ececec" stroke-width="0.800"/><path d="M807 268.500V282" stroke="#8c8c8c" stroke-width="1"/><path d="M808 268.500V282" stroke="#ececec" stroke-width="0.800"/><path d="M860 268.500V282" stroke="#8c8c8c" stroke-width="1"/><path d="M861 268.500V282" stroke="#ececec" stroke-width="0.800"/><path d="M752 275.500H759" stroke="#111" stroke-width="1.300"/><path d="M759 272.500L761.500 273.300V277.700L759 278.500Z" fill="#111"/><rect x="761.500" y="273.500" width="4" height="4" fill="#bbb" stroke="#111" stroke-width="0.800"/><path d="M766 272V279" stroke="#111" stroke-width="1.300"/><path d="M788.500 270.500V281M793.500 270.500V281" stroke="#111" stroke-width="1.400"/><rect x="789.700" y="275.500" width="2.600" height="5.500" fill="#fff"/><path d="M787 270.500h3M792 270.500h3" stroke="#111" stroke-width="1"/><path d="M817.500 270.500L822.500 278L828.500 270.500" fill="none" stroke="#a8a8a8" stroke-width="1.200"/><circle cx="822.800" cy="279" r="1.800" fill="none" stroke="#a8a8a8" stroke-width="0.900"/><rect x="839.800" y="273.500" width="7" height="7" rx="2" fill="#ddd" stroke="#a8a8a8" stroke-width="1"/><path d="M841.300 273.500V272A2 2 0 0 1 845.300 272V273.500" fill="none" stroke="#a8a8a8" stroke-width="1"/><path d="M841 276.500h4.600" stroke="#a8a8a8" stroke-width="0.700"/><rect x="869.500" y="270" width="11" height="10" fill="#f0f0ff" stroke="#1c2cc0" stroke-width="1.300"/><rect x="869.500" y="270" width="11" height="2.600" fill="#1c2cc0"/><rect x="871" y="274.500" width="5" height="3.500" fill="#888"/><path d="M877.500 274v7M880 274v7M876 277.500h6" stroke="#222" stroke-width="0.900"/><path d="M742.700 296.300H896" stroke="#2a2a2a" stroke-width="1.600"/><path d="M742.700 297.600H896" stroke="#eee" stroke-width="0.700"/></svg>
<div style="left:742.500px;top:304.500px;width:147px;height:321px;box-sizing:border-box;border-left:1px solid #8a8a8a;border-top:1px solid #8a8a8a;border-right:1px solid #f0f0f0"></div>
<div style="left:744.500px;top:306.500px;width:143px;height:4px;box-sizing:border-box;border:1px solid #a8a8a8;border-top:none;box-shadow:0 1px 0 #eee"></div>
<div style="left:891px;top:305.300px;width:3.500px;height:319px;background:#000"></div>
<div style="left:891px;top:400px;width:3.500px;height:140px;background:#8c8c8c"></div>
<div style="left:745px;top:322px;width:2px;height:7px;border-left:1px solid #8a8a8a;box-sizing:border-box"></div>
<div style="left:745.500px;top:340px;width:143px;height:285px;box-sizing:border-box;border-left:1px solid #8a8a8a;border-right:1px solid #8a8a8a;box-shadow:inset 1px 0 0 #eee"></div>
<div style="left:748px;top:315.8px;width:139px;height:13.600px;box-sizing:border-box;background:#b2b2b2;border:1px solid #1a1a1a;box-shadow:inset 1px 1px 0 #e0e0e0,inset -1px -1px 0 #7a7a7a"></div>
<span class="t" style="left:788.2px;top:317.9px;font-size:10px;transform:scaleX(0.948);">Soft Selection</span>
<span class="t" style="left:753.0px;top:317.7px;font-size:10px;transform:scaleX(0.880);font-weight:bold;">+</span>
<div style="left:748px;top:333px;width:139px;height:13.600px;box-sizing:border-box;background:#b2b2b2;border:1px solid #1a1a1a;box-shadow:inset 1px 1px 0 #e0e0e0,inset -1px -1px 0 #7a7a7a"></div>
<span class="t" style="left:788.2px;top:335.1px;font-size:10px;transform:scaleX(0.915);">Edit Geometry</span>
<span class="t" style="left:753.0px;top:334.9px;font-size:10px;transform:scaleX(0.880);font-weight:bold;">-</span>
<div style="left:751.5px;top:353.5px;width:63.5px;height:15px;background:#c5c5c5;box-shadow:inset 1px 1px 0 #f2f2f2,inset -1px -1px 0 #6a6a6a;"></div><span class="t" style="left:769.8px;top:356.1px;font-size:10px;transform:scaleX(0.900);">Create</span>
<div style="left:819.5px;top:353.5px;width:63.5px;height:15px;background:#c5c5c5;box-shadow:inset 1px 1px 0 #f2f2f2,inset -1px -1px 0 #6a6a6a;"></div><span class="t" style="left:837.5px;top:356.1px;font-size:10px;transform:scaleX(0.951);">Delete</span>
<div style="left:751.5px;top:373px;width:63.5px;height:15px;background:#c5c5c5;box-shadow:inset 1px 1px 0 #f2f2f2,inset -1px -1px 0 #6a6a6a;"></div><span class="t" style="left:769.5px;top:375.6px;font-size:10px;transform:scaleX(0.970);">Attach</span>
<div style="left:819.5px;top:373px;width:63.5px;height:15px;background:#c5c5c5;box-shadow:inset 1px 1px 0 #f2f2f2,inset -1px -1px 0 #6a6a6a;"></div><span class="t" style="left:836.0px;top:375.6px;font-size:10px;transform:scaleX(0.963);">Detach</span>
<div style="left:751.5px;top:393.3px;width:63.5px;height:14.7px;background:#c5c5c5;box-shadow:inset 1px 1px 0 #f2f2f2,inset -1px -1px 0 #6a6a6a;"></div><span class="t" style="left:770.2px;top:395.8px;font-size:10px;transform:scaleX(0.936);">Divide</span>
<div style="left:819.5px;top:393.3px;width:63.5px;height:14.7px;background:#c5c5c5;box-shadow:inset 1px 1px 0 #f2f2f2,inset -1px -1px 0 #6a6a6a;"></div><span class="t" style="left:841.8px;top:395.8px;font-size:10px;transform:scaleX(0.941);color:#9a9a9a;text-shadow:1px 1px 0 #f0f0f0;">Turn</span>
<div style="left:750.5px;top:412px;width:133.5px;height:60.5px;box-sizing:border-box;border:1px solid #848484;box-shadow:1px 1px 0 #f0f0f0,inset 1px 1px 0 #f0f0f0"></div>
<div style="left:756px;top:417px;width:59.5px;height:15.4px;background:#c5c5c5;box-shadow:inset 1px 1px 0 #f2f2f2,inset -1px -1px 0 #6a6a6a;"></div><span class="t" style="left:770.0px;top:419.8px;font-size:10px;transform:scaleX(0.914);">Extrude</span>
<div style="left:819.7px;top:417px;width:46.5px;height:15.4px;background:#e4e4e4;box-shadow:inset 1px 1px 0 #5a5a5a,inset -1px -1px 0 #f4f4f4,inset 2px 2px 0 #2e2e2e;"></div><span class="t" style="left:823.2px;top:420.0px;font-size:10px;transform:scaleX(0.880);">0,0</span>
<div style="left:870.8px;top:417.5px;width:8px;height:14.4px;background:#c5c5c5;box-shadow:inset 1px 1px 0 #eee,inset -1px -1px 0 #7a7a7a"></div><svg style="left:870.8px;top:417px" width="8" height="15.4" viewBox="0 0 8 15.4"><path d="M1.500 6.4h5l-2.500 -3.200zM1.500 9.0h5l-2.500 3.200z" fill="#111"/></svg>
<div style="left:756px;top:437.4px;width:59.5px;height:15.2px;background:#c5c5c5;box-shadow:inset 1px 1px 0 #f2f2f2,inset -1px -1px 0 #6a6a6a;"></div><span class="t" style="left:774.2px;top:440.1px;font-size:10px;transform:scaleX(0.919);">Bevel</span>
<div style="left:819.7px;top:437.4px;width:46.5px;height:15.2px;background:#e4e4e4;box-shadow:inset 1px 1px 0 #5a5a5a,inset -1px -1px 0 #f4f4f4,inset 2px 2px 0 #2e2e2e;"></div><span class="t" style="left:823.2px;top:440.3px;font-size:10px;transform:scaleX(0.880);">0,0</span>
<div style="left:870.8px;top:437.9px;width:8px;height:14.2px;background:#c5c5c5;box-shadow:inset 1px 1px 0 #eee,inset -1px -1px 0 #7a7a7a"></div><svg style="left:870.8px;top:437.4px" width="8" height="15.2" viewBox="0 0 8 15.2"><path d="M1.500 6.3h5l-2.500 -3.200zM1.500 8.9h5l-2.500 3.200z" fill="#111"/></svg>
<span class="t" style="left:756.0px;top:458.5px;font-size:10px;transform:scaleX(0.900);">Normal:</span>
<span class="t" style="left:804.7px;top:458.8px;font-size:10px;transform:scaleX(0.918);">Group</span>
<span class="t" style="left:851.0px;top:458.8px;font-size:10px;transform:scaleX(0.962);">Local</span>
<div style="left:789.3px;top:459px;width:9px;height:9px;border-radius:50%;background:#e8e8e8;box-shadow:inset 1px 1px 1px #444,inset -1px -1px 0 #fff"></div>
<div style="left:792.0px;top:461.700px;width:3.600px;height:3.600px;border-radius:50%;background:#000"></div>
<div style="left:836.0px;top:459px;width:9px;height:9px;border-radius:50%;background:#e8e8e8;box-shadow:inset 1px 1px 1px #444,inset -1px -1px 0 #fff"></div>
<div style="left:750.5px;top:476.6px;width:133.5px;height:63px;box-sizing:border-box;border:1px solid #848484;box-shadow:1px 1px 0 #f0f0f0,inset 1px 1px 0 #f0f0f0"></div>
<div style="left:756px;top:482.8px;width:59.5px;height:14.5px;background:#c5c5c5;box-shadow:inset 1px 1px 0 #f2f2f2,inset -1px -1px 0 #6a6a6a;"></div><span class="t" style="left:762.5px;top:485.2px;font-size:10px;transform:scaleX(0.929);">Slice Plane</span>
<div style="left:819.7px;top:482.8px;width:59px;height:14.5px;background:#c5c5c5;box-shadow:inset 1px 1px 0 #f2f2f2,inset -1px -1px 0 #6a6a6a;"></div><span class="t" style="left:839.0px;top:485.2px;font-size:10px;transform:scaleX(0.946);color:#9a9a9a;text-shadow:1px 1px 0 #f0f0f0;">Slice</span>
<div style="left:756px;top:504px;width:59px;height:13.500px;background:#f0c840;box-shadow:inset 1px 1px 0 #8a7a3a,inset -1px -1px 0 #f8e8a0"></div>
<span class="t" style="left:779.0px;top:506.3px;font-size:10px;transform:scaleX(0.964);">Cut</span>
<div style="left:825.5px;top:505.5px;width:10.500px;height:10.500px;background:#e4e4e4;box-shadow:inset 1px 1px 0 #5a5a5a,inset -1px -1px 0 #f4f4f4,inset 2px 2px 0 #2e2e2e;"></div>
<span class="t" style="left:842.0px;top:506.3px;font-size:10px;transform:scaleX(0.874);">Split</span>
<div style="left:758px;top:522px;width:10.500px;height:10.500px;background:#e4e4e4;box-shadow:inset 1px 1px 0 #5a5a5a,inset -1px -1px 0 #f4f4f4,inset 2px 2px 0 #2e2e2e;"></div>
<span class="t" style="left:774.5px;top:522.8px;font-size:10px;transform:scaleX(0.936);">Refine Ends</span>
<div style="left:750.5px;top:547.2px;width:133.5px;height:49.5px;box-sizing:border-box;border:1px solid #848484;box-shadow:1px 1px 0 #f0f0f0,inset 1px 1px 0 #f0f0f0"></div>
<div style="left:756.500px;top:541px;width:24.500px;height:12px;background:#c5c5c5"></div>
<span class="t" style="left:758.3px;top:542.8px;font-size:10px;transform:scaleX(0.973);">Weld</span>
<div style="left:756px;top:555px;width:59.5px;height:15.5px;background:#c5c5c5;box-shadow:inset 1px 1px 0 #f2f2f2,inset -1px -1px 0 #6a6a6a;"></div><span class="t" style="left:767.5px;top:557.9px;font-size:10px;transform:scaleX(0.938);color:#9a9a9a;text-shadow:1px 1px 0 #f0f0f0;">Selected</span>
<div style="left:819.7px;top:555px;width:47.5px;height:15.5px;background:#e4e4e4;box-shadow:inset 1px 1px 0 #5a5a5a,inset -1px -1px 0 #f4f4f4,inset 2px 2px 0 #2e2e2e;"></div><span class="t" style="left:823.2px;top:558.1px;font-size:10px;transform:scaleX(0.880);color:#9a9a9a;">1,0</span>
<div style="left:871.5px;top:555.5px;width:8px;height:14.5px;background:#c5c5c5;box-shadow:inset 1px 1px 0 #eee,inset -1px -1px 0 #7a7a7a"></div><svg style="left:871.5px;top:555px" width="8" height="15.5" viewBox="0 0 8 15.5"><path d="M1.500 6.45h5l-2.500 -3.200zM1.500 9.05h5l-2.500 3.200z" fill="#111"/></svg>
<div style="left:756px;top:576px;width:59.5px;height:15px;background:#c5c5c5;box-shadow:inset 1px 1px 0 #f2f2f2,inset -1px -1px 0 #6a6a6a;"></div><span class="t" style="left:772.5px;top:578.6px;font-size:10px;transform:scaleX(0.954);color:#9a9a9a;text-shadow:1px 1px 0 #f0f0f0;">Target</span>
<div style="left:819.7px;top:576px;width:22.5px;height:15px;background:#e4e4e4;box-shadow:inset 1px 1px 0 #5a5a5a,inset -1px -1px 0 #f4f4f4,inset 2px 2px 0 #2e2e2e;"></div><span class="t" style="left:823.2px;top:578.8px;font-size:10px;transform:scaleX(0.880);color:#9a9a9a;">4</span>
<div style="left:846.7px;top:576.5px;width:8px;height:14px;background:#c5c5c5;box-shadow:inset 1px 1px 0 #eee,inset -1px -1px 0 #7a7a7a"></div><svg style="left:846.7px;top:576px" width="8" height="15" viewBox="0 0 8 15"><path d="M1.500 6.2h5l-2.500 -3.200zM1.500 8.8h5l-2.500 3.200z" fill="#111"/></svg>
<span class="t" style="left:857.5px;top:579.1px;font-size:10px;transform:scaleX(0.900);color:#9a9a9a;text-shadow:1px 1px 0 #f0f0f0;">pixels</span>
<div style="left:750.5px;top:599.7px;width:133.5px;height:30px;box-sizing:border-box;border:1px solid #848484;box-shadow:1px 1px 0 #f0f0f0,inset 1px 1px 0 #f0f0f0"></div>
<div style="left:756px;top:605px;width:59.5px;height:15px;background:#c5c5c5;box-shadow:inset 1px 1px 0 #f2f2f2,inset -1px -1px 0 #6a6a6a;"></div><span class="t" style="left:764.8px;top:607.6px;font-size:10px;transform:scaleX(0.945);">Tessellate</span>
<div style="left:819.7px;top:605px;width:47.5px;height:15px;background:#e4e4e4;box-shadow:inset 1px 1px 0 #5a5a5a,inset -1px -1px 0 #f4f4f4,inset 2px 2px 0 #2e2e2e;"></div><span class="t" style="left:823.2px;top:607.8px;font-size:10px;transform:scaleX(0.880);">25,0</span>
<div style="left:871.5px;top:605.5px;width:8px;height:14px;background:#c5c5c5;box-shadow:inset 1px 1px 0 #eee,inset -1px -1px 0 #7a7a7a"></div><svg style="left:871.5px;top:605px" width="8" height="15" viewBox="0 0 8 15"><path d="M1.500 6.2h5l-2.500 -3.200zM1.500 8.8h5l-2.500 3.200z" fill="#111"/></svg>
<div style="left:738px;top:624.500px;width:162px;height:8px;background:#c5c5c5"></div>
<div style="left:742.500px;top:624px;width:153px;height:1px;background:#9a9a9a"></div><div style="left:742.500px;top:625px;width:153px;height:1px;background:#e8e8e8"></div>
<div style="left:738px;top:628.500px;width:162px;height:1px;background:#ececec"></div>
</body></html>
